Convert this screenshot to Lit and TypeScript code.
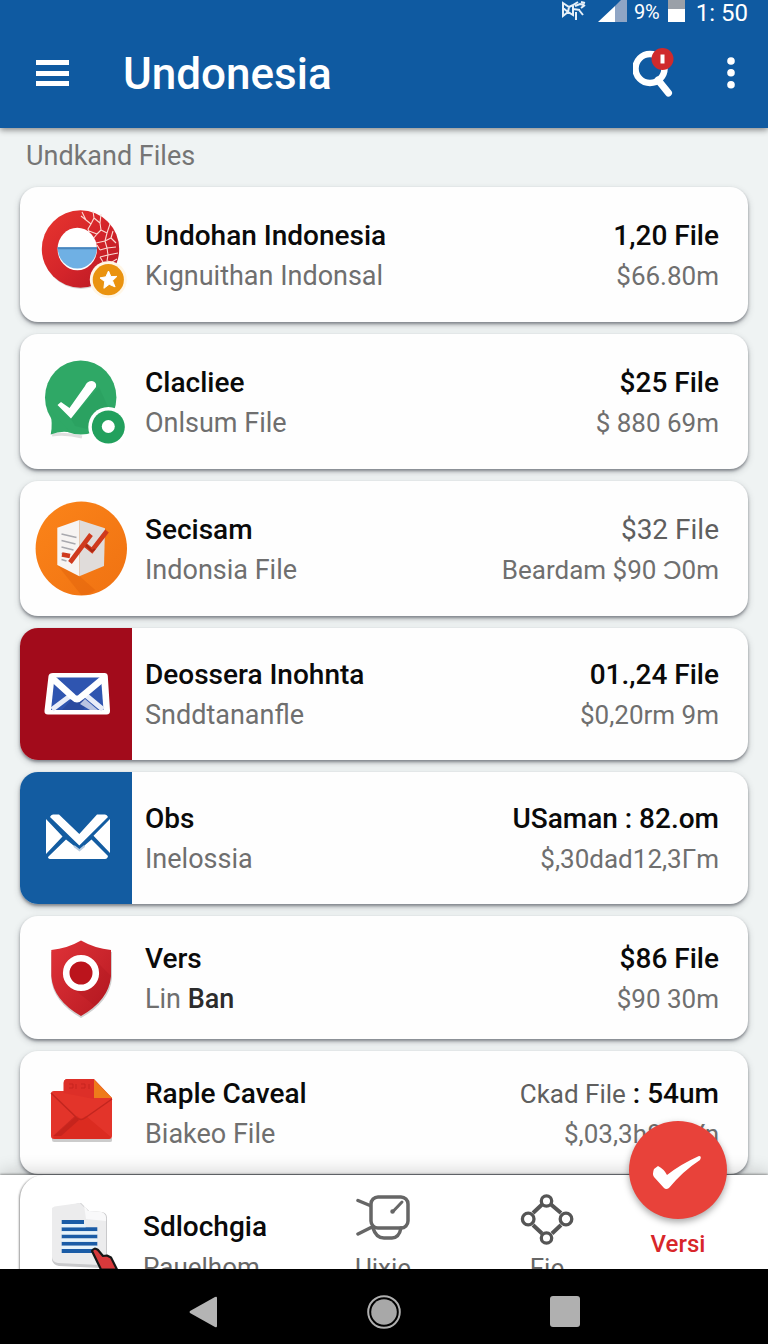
import { LitElement, html, css, svg, SVGTemplateResult, TemplateResult } from 'lit';
import { customElement, property } from 'lit/decorators.js';

interface FileRow {
  icon: string;
  title: string;
  subtitle: TemplateResult | string;
  amount: TemplateResult | string;
  detail: string;
  size: 'tall' | 'mid' | 'short';
  tile?: 'red' | 'blue';
  mutedAmount?: boolean;
}

const icons: Record<string, SVGTemplateResult> = {
  ring: svg`
    <defs>
      <linearGradient id="ringFill" x1="0" y1="0" x2="1" y2="1">
        <stop offset="0" stop-color="#e8362f" />
        <stop offset="0.55" stop-color="#d3242a" />
        <stop offset="1" stop-color="#b51823" />
      </linearGradient>
    </defs>
    <ellipse cx="61" cy="50" rx="38" ry="38" fill="#000" opacity="0.15" />
    <circle cx="60.5" cy="48" r="38.7" fill="url(#ringFill)" />
    <g fill="none" stroke="#fbd9d2" stroke-width="1.1" stroke-linejoin="round">
      <path d="M62 11l4 8 5 4 3-6-1-7M71 23l-3 5 1 3M66 19l-5-4M74 17l6 5 1 7-4 4-8-3M80 22l1-9M81 29l6 3 3-9M77 33l-4 5 2 4M87 32l-2 8-9 2M85 40l6-3 2-7M85 40l2 7-7 2M91 37l5 5M87 47l9-1M87 47l1 7-8 2M88 54l10-2M88 54l-1 6 5 1M92 61l5-3M80 49l-3-5M80 56l3 5" />
    </g>
    <ellipse cx="57.3" cy="48" rx="19.7" ry="21.3" fill="#fff" />
    <path d="M37.6 46.3h39.4a19.7 21.3 0 0 1-39.4 0z" fill="#6fb0e4" />
    <path d="M37.6 46.3h39.4v2h-39.4z" fill="#4a86bd" />
    <circle cx="88.3" cy="78.7" r="18.5" fill="#fff6e6" />
    <circle cx="88.3" cy="78.7" r="15.6" fill="#ea930f" />
    <path d="M88.5 70l2.4 5.6 6-.2-4.4 4.3 2.6 6.2-5.9-2.6-5.3 4 .8-6.7-4.7-3.7 5.9-1.1z" fill="#fff" stroke="#fff" stroke-linejoin="round" />
  `,
  check: svg`
    <path d="M32 87q14-2 30 2" fill="none" stroke="#000" stroke-width="3" opacity="0.12" />
    <ellipse cx="60.7" cy="49.5" rx="35.7" ry="37" fill="#2fa866" />
    <path d="M30 62q3 14 .7 24.5 10-4 20-2z" fill="#2fa866" />
    <path d="M51 71l28-32 10 22-22 20-12-3z" fill="#1d8c50" opacity="0.2" />
    <path d="M37.5 57l3.5-3 8.5 6 15.5-22q2-5 7-5 5 1 4 6L51 70.5z" fill="#fff" />
    <circle cx="88.3" cy="79" r="20" fill="#fff" />
    <circle cx="88.3" cy="79" r="16.5" fill="#22a05d" />
    <circle cx="88.3" cy="78.5" r="6.5" fill="#fff" />
  `,
  chart: svg`
    <defs>
      <linearGradient id="chartFill" x1="0" y1="0" x2="1" y2="1">
        <stop offset="0" stop-color="#fb8419" />
        <stop offset="1" stop-color="#f07212" />
      </linearGradient>
    </defs>
    <ellipse cx="61.3" cy="53.5" rx="45.7" ry="47" fill="url(#chartFill)" />
    <path d="M37.3 70l22 11 16 14q-6 5-14 5z" fill="#e0620c" opacity="0.45" />
    <path d="M37.3 32.7L59.3 25v56.3L37.3 70z" fill="#f7f4f2" />
    <path d="M59.3 25L85 33.3 84 71 59.3 81.3z" fill="#e0dcda" />
    <path d="M41.5 39l15 3.5M41.5 45.5l14 3.5M41.5 52l12 3M41.5 58.5l7 2M41.5 64.5l5 1.5" stroke="#a9a9ae" stroke-width="1.6" />
    <path d="M42 59.5l8 1.5M50 67.5L71 39.5M64 49l8 6.5 15-19.5" fill="none" stroke="#cf3a1d" stroke-width="4.6" />
    <path d="M66 50l6 6 3-2" fill="none" stroke="#a82814" stroke-width="2" />
  `,
  mailRed: svg`
    <path d="M33 33h51.5q3 0 3.3 3l2.2 34.500q.3 4-3.5 4H28q-4 0-3.5-4l4-34.500q.5-3 4.5-3z" fill="#fff" />
    <path d="M34.5 37.5h46.5l2.5 32.5H31z" fill="#2f55b0" />
    <path d="M32 69.5l20-15M83 69.5L65 54.5" stroke="#e9edf8" stroke-width="5" />
    <path d="M42 70l10-11q6 4 12 0l4 4-5 7z" fill="#2a4a9f" />
    <path d="M60 64l5-5 13 11h-8z" fill="#b9c4e2" />
    <path d="M31 37l22 20q4 4 8 0l24-20" fill="none" stroke="#fff" stroke-width="6.5" stroke-linejoin="round" />
  `,
  mailBlue: svg`
    <path d="M30 33q1-2.5 3-2.5h6L59.3 50 77 30.5h8q2 0 3 2.5L59.3 61.5z" fill="#fff" />
    <path d="M26 35l16.5 17.5L26 70zM90 35L73.5 51.7 90 69z" fill="#fff" />
    <path d="M46 55.5L59.3 66l12.2-10.5L88 72q-.5 3-3 3H31q-3 0-3-2z" fill="#fff" />
    <path d="M54 62l5.5 4.3 5-4.3" fill="none" stroke="#b7cbe0" stroke-width="2" />
  `,
  shield: svg`
    <defs>
      <linearGradient id="shieldFill" x1="0" y1="0" x2="1" y2="1">
        <stop offset="0" stop-color="#df3238" />
        <stop offset="1" stop-color="#b81a22" />
      </linearGradient>
    </defs>
    <path d="M61 19q14 8 31 9v26q-2 24-31 40-28-16-30-40V28q16-1 30-9z" fill="#000" opacity="0.18" />
    <path d="M61 16.5q14 8 30 9.5v26q-2 24-30 40-28-16-29.7-40V26q16-1.5 29.7-9.5z" fill="url(#shieldFill)" />
    <path d="M74 62l5-22 12 12q-1 16-16 30l-20-16z" fill="#9e1119" opacity="0.2" />
    <circle cx="61" cy="49" r="14.8" fill="#bb141c" stroke="#fff" stroke-width="6.6" />
  `,
  folder: svg`
    <path d="M32 79h60v2.5q0 1.5-2 1.5H34q-2 0-2-2z" fill="#000" opacity="0.2" />
    <path d="M43.7 40V24q0-4 4-4H74l18 19v38q0 3-3 3H34q-3 0-3-3V35q0-3 3-3h9.7z" fill="#e3342a" />
    <path d="M43.7 34V24q0-4 4-4H74v20z" fill="#dd2f28" />
    <path d="M49 25h4v4h-4M56 25v5M61 25h4v4h-4M69 25v5" fill="none" stroke="#c7251f" />
    <path d="M74 20.5L92 39H74z" fill="#ee7b1b" />
    <path d="M33 78l24-21 4 3 5-3 25 21q-1 2-3 2H36q-2 0-3-2z" fill="#db2b20" />
    <path d="M33 77l22-20 4 4-18 16z" fill="#b81f1b" opacity="0.6" />
    <path d="M31 34l26 25q4 3 8 0l27-19" fill="none" stroke="#c2261f" stroke-width="1.5" />
  `,
  doc: svg`
    <path d="M33 17q2-2 6-2l22-4 8 8 13 1q5 1 5 6v44q0 6-6 6l-42-2q-6-1-7-6z" fill="#c9c9cb" />
    <path d="M32 16q2-2 6-2l22-3 8 8 13 1q5 1 5 6v42q0 5-6 5l-42-2q-6-1-6-6z" fill="#ececed" />
    <path d="M64 13l2 14 20 2q1-7-5-9l-13-1z" fill="#f9f9fa" />
    <path d="M41.7 28H64v4H41.7zM41.7 35.3h35.6v4H41.7zM41.7 42.5h35.6v4H41.7zM41.7 49.8h35.6v4H41.7zM41.7 57h32v4h-32z" fill="#1b5ca6" />
    <path d="M41.7 32h24v3.3h-24zM41.7 39.3h35.6v3.2H41.7zM41.7 46.5h35.6v3.3H41.7zM41.7 53.8h35.6V57H41.7z" fill="#e6f3fb" />
    <path d="M72 59q2-4 6-1l5 6 4-.5 4 2 6 12H81z" fill="#d8393b" stroke="#161616" stroke-width="2.2" stroke-linejoin="round" />
  `,
};

const rows: FileRow[] = [
  { icon: 'ring', title: 'Undohan Indonesia', subtitle: 'Kıgnuithan Indonsal', amount: '1,20 File', detail: '$66.80m', size: 'tall' },
  { icon: 'check', title: 'Clacliee', subtitle: 'Onlsum File', amount: '$25 File', detail: '$ 880 69m', size: 'tall' },
  { icon: 'chart', title: 'Secisam', subtitle: 'Indonsia File', amount: '$32 File', detail: 'Beardam $90 Ɔ0m', size: 'tall', mutedAmount: true },
  { icon: 'mailRed', title: 'Deossera Inohnta', subtitle: 'Snddtananfle', amount: '01.,24 File', detail: '$0,20rm 9m', size: 'mid', tile: 'red' },
  { icon: 'mailBlue', title: 'Obs', subtitle: 'Inelossia', amount: 'USaman : 82.om', detail: '$,30dad12,3Γm', size: 'mid', tile: 'blue' },
  { icon: 'shield', title: 'Vers', subtitle: html`Lin <span class="strong">Ban</span>`, amount: '$86 File', detail: '$90 30m', size: 'short' },
  { icon: 'folder', title: 'Raple Caveal', subtitle: 'Biakeo File', amount: html`<span class="soft">Ckad File</span> : 54um`, detail: '$,03,3h80. Yn', size: 'short' },
];

const lastRow = { icon: 'doc', title: 'Sdlochgia', subtitle: 'Pauelhom' };

@customElement('file-card')
export class FileCard extends LitElement {
  static styles = css`
    :host {
      display: block;
    }
    svg {
      display: block;
    }
    .card {
      display: flex;
      box-sizing: border-box;
      background: #fefefe;
      border-radius: 18px;
      box-shadow: 0 2px 3px rgba(40, 45, 55, 0.45), 0 3px 7px rgba(40, 45, 55, 0.22);
      overflow: hidden;
    }
    .tall {
      min-height: 135px;
    }
    .mid {
      min-height: 132px;
    }
    .short {
      min-height: 123px;
    }
    .icon {
      flex: none;
      display: flex;
      align-items: center;
      width: 112px;
    }
    .red {
      background: #a20b1b;
    }
    .blue {
      background: #135ca1;
    }
    .body {
      flex: 1;
      display: grid;
      grid-template-columns: 1fr auto;
      align-content: center;
      padding: 2px 29px 0 13px;
      font-size: 27px;
      line-height: 40px;
      color: #6f6f6f;
      white-space: nowrap;
    }
    .title,
    .amount {
      color: #0a0a0a;
      font-size: 28px;
      font-weight: 500;
    }
    .amount,
    .detail {
      text-align: right;
    }
    .detail {
      font-size: 26px;
    }
    .muted,
    .soft {
      color: #5f5f5f;
      font-weight: 400;
    }
    .soft {
      font-size: 26px;
    }
    .strong {
      color: #2c2c2c;
      font-weight: 500;
    }
  `;

  @property({ attribute: false })
  row!: FileRow;

  render() {
    const { icon, title, subtitle, amount, detail, size, tile, mutedAmount } = this.row;
    return html`
      <div class="card ${size}">
        <div class="icon ${tile ?? ''}">
          <svg width="112" height="108" viewBox="0 0 112 108" aria-hidden="true">${icons[icon]}</svg>
        </div>
        <div class="body">
          <span class="title">${title}</span>
          <span class="amount ${mutedAmount ? 'muted' : ''}">${amount}</span>
          <span class="subtitle">${subtitle}</span>
          <span class="detail">${detail}</span>
        </div>
      </div>
    `;
  }
}

@customElement('app-root')
export class AppRoot extends LitElement {
  static styles = css`
    :host {
      display: flex;
      flex-direction: column;
      height: 100vh;
      overflow: hidden;
      background: #eff3f3;
      font-family: Roboto, 'Liberation Sans', sans-serif;
    }
    button {
      padding: 0;
      border: 0;
      background: none;
      color: inherit;
      font: inherit;
      cursor: pointer;
    }
    svg {
      display: block;
    }
    header {
      position: relative;
      z-index: 1;
      background: #0f5aa1;
      color: #fff;
      box-shadow: 0 2px 6px rgba(0, 0, 0, 0.45);
    }
    .status {
      display: flex;
      justify-content: flex-end;
      align-items: flex-start;
      height: 26px;
      padding-right: 20px;
      font-size: 24px;
      line-height: 26px;
    }
    .percent {
      margin: 0 8px 0 6px;
      font-size: 20px;
      line-height: 24px;
    }
    .signal {
      margin-left: 12px;
    }
    .clock {
      margin-left: 11px;
    }
    .toolbar {
      display: flex;
      align-items: center;
      box-sizing: border-box;
      height: 102px;
      padding: 0 27px 6px 36px;
    }
    h1 {
      flex: 1;
      margin: 0 0 0 54px;
      font-size: 44px;
      line-height: 52px;
      font-weight: 500;
    }
    .more {
      margin-left: 47px;
    }
    main {
      flex: 1;
      min-height: 0;
      overflow: hidden;
      padding: 8px 20px 0;
    }
    h2 {
      margin: 0 0 11px 6px;
      font-size: 27px;
      line-height: 40px;
      font-weight: 400;
      color: #757575;
    }
    ul {
      display: flex;
      flex-direction: column;
      gap: 12px;
      margin: 0;
      padding: 0;
      list-style: none;
    }
    .bottom {
      flex: none;
      position: relative;
      display: grid;
      grid-template-columns: 1fr 164px 164px 98px;
      height: 94px;
      padding: 0 41px 0 20px;
      background: #fff;
      box-shadow: 0 -1px 2px rgba(0, 0, 0, 0.35), 0 -4px 16px rgba(0, 0, 0, 0.16);
      font-size: 26px;
      line-height: 32px;
      color: #666;
    }
    .peek {
      display: flex;
      align-items: center;
      height: 142px;
      border-radius: 24px 0 0 0;
      box-shadow: -2px 0 2px -1px rgba(0, 0, 0, 0.4);
      font-size: 26px;
      line-height: 40px;
    }
    .peek-text {
      display: grid;
      padding: 2px 0 0 11px;
    }
    .peek-title {
      color: #0a0a0a;
      font-size: 28px;
      font-weight: 500;
    }
    .tab {
      display: flex;
      flex-direction: column;
      align-items: center;
      gap: 7px;
      padding-top: 18px;
    }
    .fab {
      display: flex;
      flex-direction: column;
      align-items: center;
      align-self: start;
      gap: 9px;
      margin-top: -54px;
      font-size: 24px;
      font-weight: 500;
      color: #d8262a;
    }
    .disc {
      border-radius: 50%;
      background: #e8423a;
      box-shadow: 0 3px 7px rgba(0, 0, 0, 0.35);
    }
    .system {
      position: relative;
      flex: none;
      display: grid;
      grid-template-columns: repeat(3, 1fr);
      height: 75px;
      padding: 10px 112px 0;
      box-sizing: border-box;
      background: #000;
    }
    .key {
      display: flex;
      justify-content: center;
      align-items: center;
    }
  `;

  private renderStatus() {
    return html`
      <div class="status">
        <svg width="25" height="22" viewBox="0 0 25 22" fill="none" stroke="#e6eff8" stroke-width="2">
          <path d="M2 4v12l5-4 5 3V5L8 7 2 3zM2 8l5 4M8 7l-1 5M12 5l5-3M12 9l7 1M14 6l5-2 4 1M15 12v8M18 10l4 5M20 2l4 1M20 8l4-3" />
        </svg>
        <svg class="signal" width="30" height="22" viewBox="0 0 30 22">
          <path d="M0 22L17 6v16z" fill="#fff" />
          <path d="M17 6l6-6h6v22H17z" fill="#8fa5c5" />
        </svg>
        <span class="percent">9%</span>
        <svg width="17" height="22" viewBox="0 0 17 22">
          <path d="M0 0h17v9H0z" fill="#9aa0a8" />
          <path d="M0 9h17v13H0z" fill="#fff" />
        </svg>
        <span class="clock">1: 50</span>
      </div>
    `;
  }

  private renderToolbar() {
    return html`
      <div class="toolbar">
        <button aria-label="Menu">
          <svg width="33" height="28" viewBox="0 0 33 28" fill="#fff">
            <path d="M0 0h33v5H0zM0 11h33v5H0zM0 21h33v5H0z" />
          </svg>
        </button>
        <h1>Undonesia</h1>
        <button aria-label="Search">
          <svg width="41" height="52" viewBox="0 0 41 52">
            <circle cx="17" cy="20.5" r="14.5" fill="none" stroke="#fff" stroke-width="6.5" />
            <path d="M25 32l10.5 13" stroke="#fff" stroke-width="7" stroke-linecap="round" />
            <circle cx="29.5" cy="11" r="11" fill="#cf2a2c" />
            <path d="M29.5 6.5v9" stroke="#fff" stroke-width="4" />
          </svg>
        </button>
        <button class="more" aria-label="More options">
          <svg width="20" height="36" viewBox="0 0 20 36" fill="#fff">
            <circle cx="10" cy="5" r="3.8" />
            <circle cx="10" cy="16.8" r="3.8" />
            <circle cx="10" cy="28.8" r="3.8" />
          </svg>
        </button>
      </div>
    `;
  }

  private renderBottom() {
    return html`
      <nav class="bottom">
        <div class="peek">
          <svg width="112" height="108" viewBox="0 0 112 108" aria-hidden="true">${icons[lastRow.icon]}</svg>
          <div class="peek-text">
            <span class="peek-title">${lastRow.title}</span>
            <span>${lastRow.subtitle}</span>
          </div>
        </div>
        <button class="tab">
          <svg width="54" height="52" viewBox="0 0 54 52" fill="none" stroke="#666" stroke-width="3.5" stroke-linecap="round">
            <rect x="15" y="4" width="37" height="31" rx="7" />
            <path d="M2 7.5l12 5M2 41l14-7M17 35q3 10 11 10h8q7 0 9-10" />
            <path d="M37 18.5l9-9.5" stroke-width="3" />
            <circle cx="36.5" cy="18.5" r="1.5" fill="#666" stroke-width="1.5" />
          </svg>
          <span>Uixie</span>
        </button>
        <button class="tab">
          <svg width="54" height="52" viewBox="0 0 54 52" fill="none" stroke="#555" stroke-width="3.3">
            <path d="M22 11.5L13 20M31 11.5L41 20M13 32l9 8.5M41 32l-9 8.5" stroke-width="4" />
            <circle cx="26.5" cy="8" r="5.2" />
            <circle cx="8.2" cy="26" r="5.8" />
            <circle cx="46" cy="26" r="5.8" />
            <circle cx="26.5" cy="45" r="5.2" />
          </svg>
          <span>Fie</span>
        </button>
        <button class="fab">
          <svg class="disc" width="98" height="98" viewBox="0 0 98 98">
            <path d="M25 48l4-3q6 3 9 9 14-11 32-19 3 0 1 4Q54 50 40 67q-3 2-5 0l-10-11q-2-3 0-8z" fill="#fff" />
          </svg>
          <span>Versi</span>
        </button>
      </nav>
    `;
  }

  private renderSystem() {
    return html`
      <div class="system">
        <button class="key" aria-label="Back">
          <svg width="30" height="34" viewBox="0 0 30 34">
            <path d="M2 16L27 2q2-1 2 1v28q0 2-2 1L2 18q-1-1 0-2z" fill="#b4b4b4" />
          </svg>
        </button>
        <button class="key" aria-label="Home">
          <svg width="34" height="34" viewBox="0 0 34 34">
            <circle cx="17" cy="17" r="15.8" fill="none" stroke="#b0b0b0" stroke-width="2" />
            <circle cx="17" cy="17" r="12.8" fill="#a8a8a8" />
          </svg>
        </button>
        <button class="key" aria-label="Recent apps">
          <svg width="30" height="32" viewBox="0 0 30 32">
            <rect width="30" height="31" rx="3" fill="#b0b0b0" />
          </svg>
        </button>
      </div>
    `;
  }

  render() {
    return html`
      <header>${this.renderStatus()} ${this.renderToolbar()}</header>
      <main>
        <h2>Undkand Files</h2>
        <ul>
          ${rows.map(row => html`<li><file-card .row=${row}></file-card></li>`)}
        </ul>
      </main>
      ${this.renderBottom()} ${this.renderSystem()}
    `;
  }
}
